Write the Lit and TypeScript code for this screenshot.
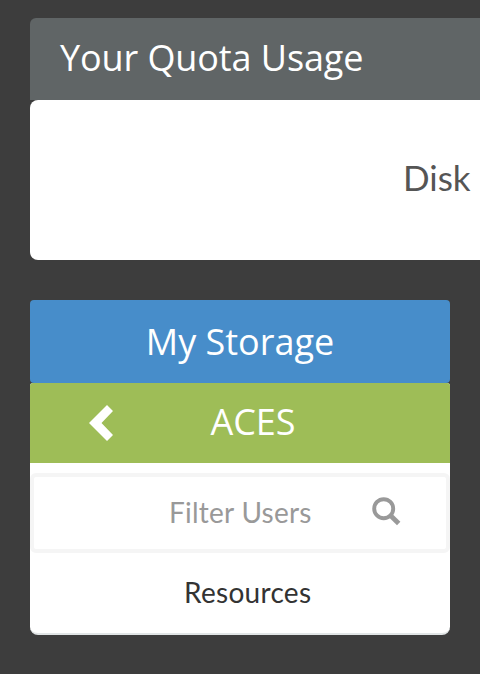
import { LitElement, html, css } from "lit";
import { customElement } from "lit/decorators.js";

@customElement("app-root")
class AppRoot extends LitElement {
  static styles = css`
    :host { display: block; height: 674px; overflow: hidden; background: #3d3d3d; box-sizing: border-box; padding: 18px 0 0 30px; }
    .quota { width: 900px; margin-bottom: 40px; }
    .quota-head { height: 82px; box-sizing: border-box; padding-left: 30px; background: #606566; color: #fff; border-radius: 6px 6px 0 0; font: 36px/80px "Open Sans", sans-serif; letter-spacing: -0.1px; }
    .quota-body { height: 160px; background: #fff; border-radius: 8px; box-sizing: border-box; padding-left: 373px; font: 35px/155px Lato, sans-serif; color: #555; }
    .storage { width: 420px; }
    .bar { font: 36px/84px "Open Sans", sans-serif; color: #fff; text-align: center; }
    .mine { height: 83px; background: #478dca; border-radius: 4px; }
    .panel { height: 252px; box-sizing: border-box; overflow: hidden; background: #fff; border-bottom: 2px solid #e1e5e6; border-radius: 3px 3px 8px 8px; }
    .group { display: grid; height: 80px; line-height: 78px; background: #9ebd57; grid-template-columns: 59px 24px 1fr; align-items: center; }
    .group svg { grid-column: 2; }
    .group span { height: 80px; padding-right: 57px; }
    .filter { height: 80px; margin-top: 10px; box-sizing: border-box; border: 4px solid #f5f5f5; border-radius: 6px; display: flex; align-items: center; font: 28px/71px Lato, sans-serif; color: #999; padding-left: 135px; letter-spacing: 0.25px; }
    .filter span { width: 203px; height: 72px; }
    .item { font: 28px/79px Lato, sans-serif; color: #333; padding-left: 154px; letter-spacing: 0.3px; }
  `;
  render() {
    return html`
      <section class="quota">
        <div class="quota-head">Your Quota Usage</div>
        <div class="quota-body">Disk</div>
      </section>
      <section class="storage">
        <div class="bar mine">My Storage</div>
        <div class="panel">
          <div class="bar group">
            <svg width="24" height="36" viewBox="0 0 24 36"><path fill="#fff" d="M18 0L24 6L12.5 18L24 30L18 36L0 18Z"/></svg>
            <span>ACES</span>
          </div>
          <div class="filter">
            <span>Filter Users</span>
            <svg width="30" height="32" viewBox="0 0 30 32" fill="none" stroke="#999"><circle cx="11.7" cy="11.7" r="9.5" stroke-width="3.9"/><path d="M18.5 18.5L26.7 26.5" stroke-width="4.8"/></svg>
          </div>
          <div class="item">Resources</div>
        </div>
      </section>`;
  }
}
